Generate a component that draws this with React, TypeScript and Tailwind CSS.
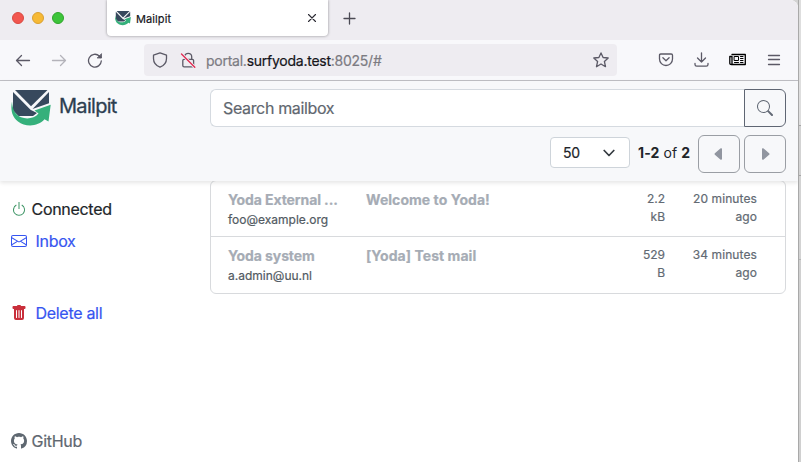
import React from "react";
import {
  BsPower,
  BsEnvelope,
  BsTrashFill,
  BsGithub,
  BsSearch,
  BsCaretLeftFill,
  BsCaretRightFill,
} from "react-icons/bs";

function MailpitLogo({ className }: { className: string }) {
  return (
    <svg viewBox="0 0 40 37" className={className}>
      <path d="M4 1H36.500L20 17.300Z" fill="#37495d" />
      <path d="M2 3L19.500 20.700L26 24L22 27H7.500L2 21.500Z" fill="#37495d" />
      <path d="M38 3V14.300L21.500 20Z" fill="#37495d" />
      <path
        d="M1 12.500C-0.500 20 0.500 27.500 7 32.500C14 38 27 38 33.500 30.300L37.500 32.500L39.700 15.800L23.500 21.500L27.500 24.500C23.500 29.500 16 30.500 10 28.300C4.500 26 1.500 21 1 12.500Z"
        fill="#35b07b"
      />
    </svg>
  );
}

type LineIconProps = { className: string; children: React.ReactNode; box?: string };

function LineIcon({ className, children, box = "0 0 16 16" }: LineIconProps) {
  return (
    <svg
      viewBox={box}
      className={className}
      fill="none"
      stroke="currentColor"
      strokeWidth="1.3"
      strokeLinecap="round"
      strokeLinejoin="round"
    >
      {children}
    </svg>
  );
}

function TabBar() {
  return (
    <div className="flex h-10 items-start bg-[#eeecf1]">
      <div className="flex w-[107px] gap-2 pt-3 pl-3">
        <span className="size-3 rounded-full border border-[#d94a43] bg-[#f2564f]" />
        <span className="size-3 rounded-full border border-[#d9a032] bg-[#f6b935]" />
        <span className="size-3 rounded-full border border-[#30a52c] bg-[#3dc43b]" />
      </div>
      <div className="flex h-9 w-[221px] items-center rounded-b bg-white pl-2 shadow-[0_0_3px_rgba(0,0,0,0.4)]">
        <MailpitLogo className="h-4 w-4" />
        <span className="ml-[5px] pt-[2px] text-[11px] tracking-[0.1px] text-[#15141a] [-webkit-text-stroke:0.2px]">
          Mailpit
        </span>
        <LineIcon className="mr-[11px] ml-auto size-[10px] text-[#2b2a33]" box="0 0 10 10">
          <path d="M1.500 1.500L8.500 8.500M8.500 1.500L1.500 8.500" strokeWidth="1.100" />
        </LineIcon>
      </div>
      <LineIcon className="mt-3 ml-[15px] size-[13px] text-[#4b4a54]" box="0 0 13 13">
        <path d="M6.500 1V12M1 6.500H12" />
      </LineIcon>
    </div>
  );
}

function AddressBar() {
  return (
    <div className="flex h-[41px] items-center border-b border-[#bfbfc4] bg-[#f8f8fb] text-[#5b5966]">
      <LineIcon className="ml-[15px] size-4">
        <path d="M14.500 8.500H1.500M6.500 3.500L1.500 8.500L6.500 13.500" />
      </LineIcon>
      <LineIcon className="ml-[20px] size-4 text-[#b4b3ba]">
        <path d="M1.500 8.500H14.500M9.500 3.500L14.500 8.500L9.500 13.500" />
      </LineIcon>
      <LineIcon className="ml-5 size-4">
        <path d="M14.300 9A6.400 6.400 0 1 1 12.300 4L13.800 5.500" />
        <path d="M14.500 2V6H10.500Z" fill="currentColor" strokeWidth="0.8" />
      </LineIcon>
      <div className="ml-[41px] flex h-8 w-[473px] items-center rounded bg-[#eeecf1]">
        <LineIcon className="ml-2 size-4">
          <path d="M8 0.900L14.500 3.200V6.500C14.500 10.500 12 13.600 8 15.200C4 13.600 1.500 10.500 1.500 6.500V3.200Z" />
        </LineIcon>
        <LineIcon className="ml-3 size-4">
          <rect x="2.800" y="7.300" width="10.800" height="7.500" rx="1.300" />
          <path d="M4.700 7V4.800A3.500 3.500 0 0 1 11.700 4.800V7" />
          <path d="M1.500 2L14.800 15.300" stroke="#eeecf1" strokeWidth="3" />
          <path d="M1.500 2L14.800 15.300" stroke="#e22850" />
        </LineIcon>
        <span className="ml-[10px] pt-px text-[14px] tracking-[-0.25px] whitespace-nowrap text-[#7c7b82] [-webkit-text-stroke:0.2px]">
          portal.<span className="text-[#15141a]">surfyoda.test</span>:8025/#
        </span>
        <LineIcon className="mr-2 ml-auto size-4">
          <path d="M8 0.900L10.100 5.500L15.200 6L11.400 9.500L12.500 14.700L8 12L3.500 14.700L4.600 9.500L0.800 6L5.900 5.500Z" />
        </LineIcon>
      </div>
      <LineIcon className="ml-[41px] size-4">
        <path d="M2.800 2H13.200Q14.500 2 14.500 3.300V7A6.500 6.500 0 0 1 1.500 7V3.300Q1.500 2 2.800 2Z" />
        <path d="M4.900 5.800L8 8.700L11.100 5.800" />
      </LineIcon>
      <LineIcon className="ml-[19px] size-4">
        <path d="M8.500 0.800V10M4.500 6L8.500 10L12.500 6M2 11.500V12.500Q2 14.200 3.700 14.200H13.300Q15 14.200 15 12.500V11.500" />
      </LineIcon>
      <LineIcon className="ml-5 h-4 w-[17px] text-black" box="0 0 17 16">
        <path d="M3 2.500H16.300V12.500H2.500Q0.800 12.500 0.800 11.200V4.500H3V12" strokeWidth="1.300" />
        <path d="M5.500 4.500H9.500V8.500H5.500ZM11.500 4.500H14M11.500 6.500H14M11.500 8.500H14M5.500 10.500H9.500M11.500 10.500H14" strokeWidth="1" />
      </LineIcon>
      <LineIcon className="ml-[20px] size-4">
        <path d="M2.500 3.500H13.500M2.500 7.500H13.500M2.500 12.500H13.500" />
      </LineIcon>
    </div>
  );
}

const pagerButton =
  "flex h-[38px] w-[42px] items-center justify-center rounded-md border border-[#9a9ea4] text-[#9196a0]";

function Header() {
  return (
    <header className="relative z-10 flex h-[100px] bg-[#f7f8fa] shadow-[0_2px_4px_rgba(0,0,0,0.1)]">
      <div className="flex w-[210px] items-start pt-2 pl-[11px]">
        <MailpitLogo className="h-[37px] w-10" />
        <span className="ml-2 pt-[3px] text-[20px] leading-7 tracking-[-0.7px] text-[#2c3e50] [-webkit-text-stroke:0.3px]">
          Mailpit
        </span>
      </div>
      <div className="flex w-[576px] flex-col pt-2">
        <div className="flex h-[38px]">
          <div className="flex flex-1 items-center rounded-l-md border border-r-0 border-[#d5dae0] bg-white pl-3 text-[16px] tracking-[-0.35px] text-[#5f676f] [-webkit-text-stroke:0.2px]">
            Search mailbox
          </div>
          <div className="flex w-[42px] items-center justify-center rounded-r-md border border-[#5f6673] text-[#626975]">
            <BsSearch className="size-4" />
          </div>
        </div>
        <div className="mt-2 flex h-[38px] justify-end text-[14px] text-[#212529]">
          <div className="mt-[2px] flex h-[31px] w-20 items-center justify-between rounded border border-[#ced4da] bg-white pr-[14px] pl-3">
            <span className="tracking-[-0.3px] [-webkit-text-stroke:0.2px]">50</span>
            <LineIcon className="size-3 text-[#343a40]" box="0 0 12 12">
              <path d="M1.200 3.500L6 8.500L10.800 3.500" strokeWidth="1.700" />
            </LineIcon>
          </div>
          <span className="ml-2 w-[60px] leading-[36px] tracking-[0.1px] whitespace-nowrap">
            <b>1-2</b> of <b>2</b>
          </span>
          <div className={pagerButton}>
            <BsCaretLeftFill className="size-4" />
          </div>
          <div className={`${pagerButton} ml-1`}>
            <BsCaretRightFill className="size-4" />
          </div>
        </div>
      </div>
    </header>
  );
}

function Sidebar() {
  return (
    <nav className="flex w-[210px] flex-col pt-[16px] pl-[11px] text-[16px] leading-6 tracking-[-0.3px] [-webkit-text-stroke:0.2px]">
      <div className="flex h-6 items-center text-[#212529]">
        <BsPower className="mr-[4.500px] size-4 text-[#3c9464]" />
        Connected
      </div>
      <div className="mt-2 flex h-6 items-center text-[#3655f0]">
        <BsEnvelope className="mr-[8.500px] size-4" />
        Inbox
      </div>
      <div className="mt-12 flex h-6 items-center text-[#3655f0]">
        <BsTrashFill className="mr-[8.500px] size-4 text-[#c92f3b]" />
        Delete all
      </div>
      <div className="mt-auto mb-[9px] flex h-6 items-center text-[#5f6871]">
        <BsGithub className="mr-[4.500px] size-4" />
        GitHub
      </div>
    </nav>
  );
}

const messages = [
  { from: "Yoda External ...", email: "foo@example.org", subject: "Welcome to Yoda!", size: ["2.2", "kB"], age: "20 minutes" },
  { from: "Yoda system", email: "a.admin@uu.nl", subject: "[Yoda] Test mail", size: ["529", "B"], age: "34 minutes" },
];

function MessageList() {
  return (
    <div className="-mt-px h-[114px] w-[576px] rounded-md border border-[#d8dadd] bg-white">
      {messages.map((m) => (
        <div
          key={m.email}
          className="flex h-14 border-b border-[#d8dadd] pt-[9px] pl-[17px] text-[12px] leading-[18px] text-[#626a73] last:border-b-0 [-webkit-text-stroke:0.2px]"
        >
          <div className="w-[138px]">
            <div className="text-[14px] leading-[20px] font-bold tracking-[-0.1px] text-[#a6acb5]">{m.from}</div>
            <div className="leading-5 text-[#525a62]">{m.email}</div>
          </div>
          <div className="w-[240px] text-[14px] leading-[20px] font-bold tracking-[0.05px] text-[#a6acb5]">{m.subject}</div>
          <div className="w-[59px] text-right">
            {m.size[0]}
            <br />
            {m.size[1]}
          </div>
          <div className="w-[92px] text-right tracking-[0.1px]">
            {m.age}
            <br />
            ago
          </div>
        </div>
      ))}
    </div>
  );
}

export default function App() {
  return (
    <div className="flex h-[462px] w-[801px] overflow-hidden bg-[#d3d3d3] font-['Inter','Liberation_Sans',sans-serif]">
      <div className="flex w-[798px] flex-col overflow-hidden rounded-tr-lg bg-white">
        <TabBar />
        <AddressBar />
        <Header />
        <main className="flex flex-1">
          <Sidebar />
          <MessageList />
        </main>
      </div>
      <div className="flex w-[3px] flex-col border-l border-[#a9a9a9]">
        <div className="h-[126px] border-b border-[#a5a5a5] bg-[#dedede]" />
        <div className="h-[50px] border-b border-[#a5a5a5]" />
        <div className="h-[84px] border-b border-[#b5b5b5]" />
        <div className="flex-1 bg-[#d0d0d0]" />
      </div>
    </div>
  );
}
